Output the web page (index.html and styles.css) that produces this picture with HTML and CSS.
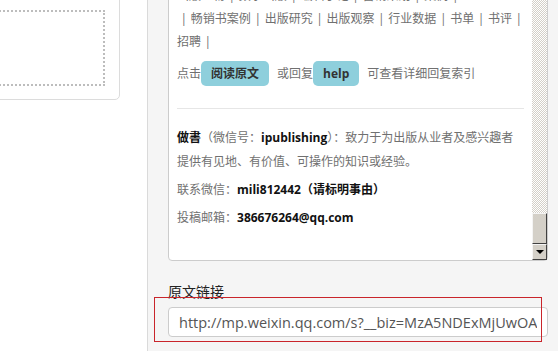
FILE: index.html
```html
<!DOCTYPE html>
<html lang="zh-CN">
<head>
    <meta charset="UTF-8">
    <title>原文链接</title>
    <link rel="stylesheet" href="styles.css">
</head>
<body>
    <div class="left-side">
        <div class="cover-card">
            <div class="cover-drop"></div>
        </div>
    </div>

    <div class="edit-panel">
        <div class="preview-box">
            <p class="menu-line">出版人物 | 数字出版 | 编辑手记 | 营销策划 | 案例 |<br>&nbsp;| 畅销书案例 | 出版研究 | 出版观察 | 行业数据 | 书单 | 书评 |<br>招聘 |</p>
            <p class="reply-line">点击<span class="tag-btn">阅读原文</span>或回复<span class="tag-btn">help</span>可查看详细回复索引</p>
            <div class="divider"></div>
            <p class="info-line"><b>做書</b>（微信号：<b>ipublishing</b>）：致力于为出版从业者及感兴趣者提供有见地、有价值、可操作的知识或经验。</p>
            <p class="info-line">联系微信：<b>mili812442（请标明事由）</b></p>
            <p class="info-line">投稿邮箱：<b>386676264@qq.com</b></p>

            <!-- old style scrollbar drawn over the box -->
            <div class="fake-scroll">
                <div class="scroll-track"></div>
                <div class="scroll-thumb"></div>
                <div class="scroll-down"><span class="arrow-down"></span></div>
            </div>
        </div>

        <div class="field-label">原文链接</div>
        <input class="url-input" type="text" readonly value="http://mp.weixin.qq.com/s?__biz=MzA5NDExMjUwOA==&amp;mid=2650384012&amp;idx=1&amp;sn=8f3c1d2a">

        <div class="red-mark"></div>
    </div>
</body>
</html>
```

FILE: styles.css
```css
html, body {
    margin: 0;
    padding: 0;
    height: 351px;
    overflow: hidden;
}

body {
    display: flex;
    font-family: "Open Sans", "Noto Sans CJK SC", sans-serif;
    background-color: #fff;
}

/* left column with the cover upload card */
.left-side {
    width: 147px;
    flex: none;
    background-color: #fff;
}

.cover-card {
    margin: -10px 27px 0 -10px;
    padding: 19px 14px 13px 0;
    border: 1px solid #dcdcdc;
    border-radius: 0 0 5px 0;
}

.cover-drop {
    height: 72px;
    border: 2px dotted #bdbdbd;
    border-left: none;
}

/* right editing panel */
.edit-panel {
    flex: 1;
    position: relative;
    border-left: 1px solid #dadada;
    background-color: #f5f5f5;
    padding: 0 10px 0 20px;
}

.preview-box {
    position: relative;
    margin-top: -27px;
    padding: 10px 23px 30px 8px;
    background-color: #fff;
    border: 1px solid #cccccc;
    border-radius: 4px;
    font-size: 12px;
    color: #707070;
}

.preview-box p {
    margin: 0;
}

.preview-box b {
    color: #111;
}

.menu-line {
    line-height: 23px;
    white-space: nowrap;
    word-spacing: 0.5px;
}

.reply-line {
    line-height: 25px;
    margin-top: 8px !important;
}

.tag-btn {
    display: inline-block;
    padding: 4px 10px;
    margin-right: 8px;
    line-height: 17px;
    border-radius: 5px;
    background-color: #8ecfdc;
    color: #333;
    font-weight: bold;
}

.divider {
    margin-top: 22px;
    border-top: 1px solid #e6e6e6;
}

.info-line {
    line-height: 24px;
    margin-top: 4px !important;
}

.divider + .info-line {
    margin-top: 17px !important;
}

/* windows classic style scrollbar */
.fake-scroll {
    position: absolute;
    top: 0;
    right: 0;
    bottom: 0;
    width: 15px;
    display: flex;
    flex-direction: column;
}

.scroll-track {
    flex: 1;
    background: repeating-conic-gradient(#d4d0c8 0 25%, #ffffff 0 50%) 0 0 / 2px 2px;
}

.scroll-thumb,
.scroll-down {
    box-sizing: border-box;
    background-color: #d4d0c8;
    border: 1px solid;
    border-color: #f4f4f4 #404040 #404040 #f4f4f4;
}

.scroll-thumb {
    height: 31px;
}

.scroll-down {
    height: 16px;
    display: flex;
    align-items: center;
    justify-content: center;
}

.arrow-down {
    width: 0;
    height: 0;
    border-left: 4px solid transparent;
    border-right: 4px solid transparent;
    border-top: 4px solid #000;
}

.field-label {
    margin-top: 21px;
    line-height: 20px;
    font-size: 14px;
    color: #222;
}

.url-input {
    display: block;
    box-sizing: border-box;
    width: 100%;
    height: 30px;
    margin-top: 5px;
    padding: 0 10px;
    border: 1px solid #cccccc;
    border-radius: 4px;
    background-color: #fff;
    font-family: "Open Sans", sans-serif;
    font-size: 14.5px;
    color: #555;
    outline: none;
}

/* red annotation frame over the link field */
.red-mark {
    position: absolute;
    left: 6px;
    top: 297px;
    width: 388px;
    height: 45px;
    box-sizing: border-box;
    border: 1px solid #c9252b;
    pointer-events: none;
}
```
